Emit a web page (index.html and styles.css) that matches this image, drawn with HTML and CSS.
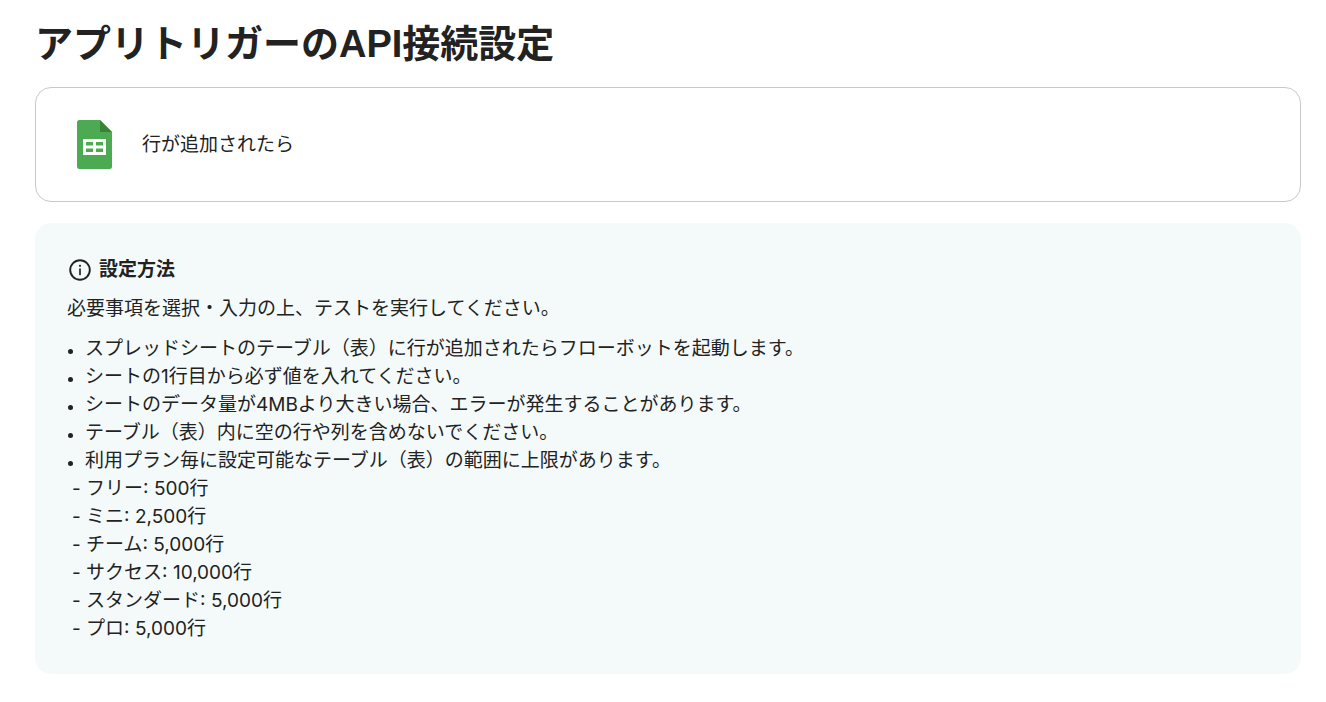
FILE: index.html
```html
<!DOCTYPE html>
<html lang="ja">
<head>
  <meta charset="UTF-8">
  <meta name="viewport" content="width=device-width, initial-scale=1">
  <title>アプリトリガーのAPI接続設定</title>
  <link rel="stylesheet" href="styles.css">
</head>
<body>

<main class="page">
  <h1 class="page-title">アプリトリガーのAPI接続設定</h1>

  <div class="trigger-card">
    <svg class="sheets-icon" viewBox="0 0 35 49" aria-hidden="true">
      <path fill="#4caa52" d="M2.5 0H23l12 12v34.5a2.5 2.5 0 0 1-2.5 2.5h-30A2.5 2.5 0 0 1 0 46.5v-44A2.5 2.5 0 0 1 2.5 0z"/>
      <path fill="#3a8238" d="M23 0l12 12H23z"/>
      <path fill="#fff" fill-rule="evenodd" d="M6 19h23v16H6zM9 22v3.500h7V22zM19 22v3.500h7V22zM9 28.500V32h7v-3.500zM19 28.500V32h7v-3.500z"/>
    </svg>
    <p class="trigger-name">行が追加されたら</p>
  </div>

  <section class="guide">
    <h2 class="guide-title">
      <svg class="info-icon" viewBox="0 0 22 22" aria-hidden="true">
        <circle cx="11" cy="11" r="9.8" fill="none" stroke="#222" stroke-width="1.9"/>
        <path d="M11 10v5.500" stroke="#222" stroke-width="1.7" stroke-linecap="round"/>
        <circle cx="11" cy="6.8" r="1.100" fill="#222"/>
      </svg>
      設定方法
    </h2>
    <p class="guide-lead">必要事項を選択・入力の上、テストを実行してください。</p>
    <ul class="guide-list">
      <li>スプレッドシートのテーブル（表）に行が追加されたらフローボットを起動します。</li>
      <li>シートの1行目から必ず値を入れてください。</li>
      <li>シートのデータ量が4MBより大きい場合、エラーが発生することがあります。</li>
      <li>テーブル（表）内に空の行や列を含めないでください。</li>
      <li>利用プラン毎に設定可能なテーブル（表）の範囲に上限があります。</li>
    </ul>
    <div class="plan-list">
      <p>- フリー: 500行</p>
      <p>- ミニ: 2,500行</p>
      <p>- チーム: 5,000行</p>
      <p>- サクセス: 10,000行</p>
      <p>- スタンダード: 5,000行</p>
      <p>- プロ: 5,000行</p>
    </div>
  </section>
</main>

</body>
</html>
```
FILE: styles.css
```css
* {
  box-sizing: border-box;
}

body {
  margin: 0;
  background: #fff;
  color: #222;
  font-family: Inter, "Noto Sans CJK JP", sans-serif;
  font-size: 19px;
  line-height: 28px;
}

h1, h2, p, ul {
  margin: 0;
  padding: 0;
}

.page {
  padding: 20px 25px 28px 35px;
}

.page-title {
  margin-bottom: 19px;
  font-family: "Liberation Sans", "Noto Sans CJK JP", sans-serif;
  font-size: 38px;
  font-weight: 700;
  line-height: 48px;
}

.trigger-card {
  display: flex;
  align-items: center;
  gap: 30px;
  margin-bottom: 21px;
  padding: 32px 41px;
  border: 1px solid #c9c9c9;
  border-radius: 16px;
}

.sheets-icon {
  flex: none;
  width: 35px;
  height: 49px;
}

.guide {
  padding: 33px 32px 31px;
  border-radius: 16px;
  background: #f4fafa;
}

.guide-title {
  display: flex;
  align-items: center;
  gap: 8px;
  margin-bottom: 11px;
  padding-left: 2px;
  font-size: 19px;
  font-weight: 700;
}

.info-icon {
  flex: none;
  width: 22px;
  height: 22px;
}

.guide-lead {
  margin-bottom: 12px;
}

.guide-list {
  list-style: none;
}

.guide-list li {
  display: flex;
  gap: 12px;
}

.guide-list li::before {
  content: "";
  flex: none;
  width: 5px;
  height: 5px;
  margin-top: 14px;
  margin-left: 1px;
  border-radius: 50%;
  background: #222;
}

.plan-list {
  padding-left: 5px;
}
```
